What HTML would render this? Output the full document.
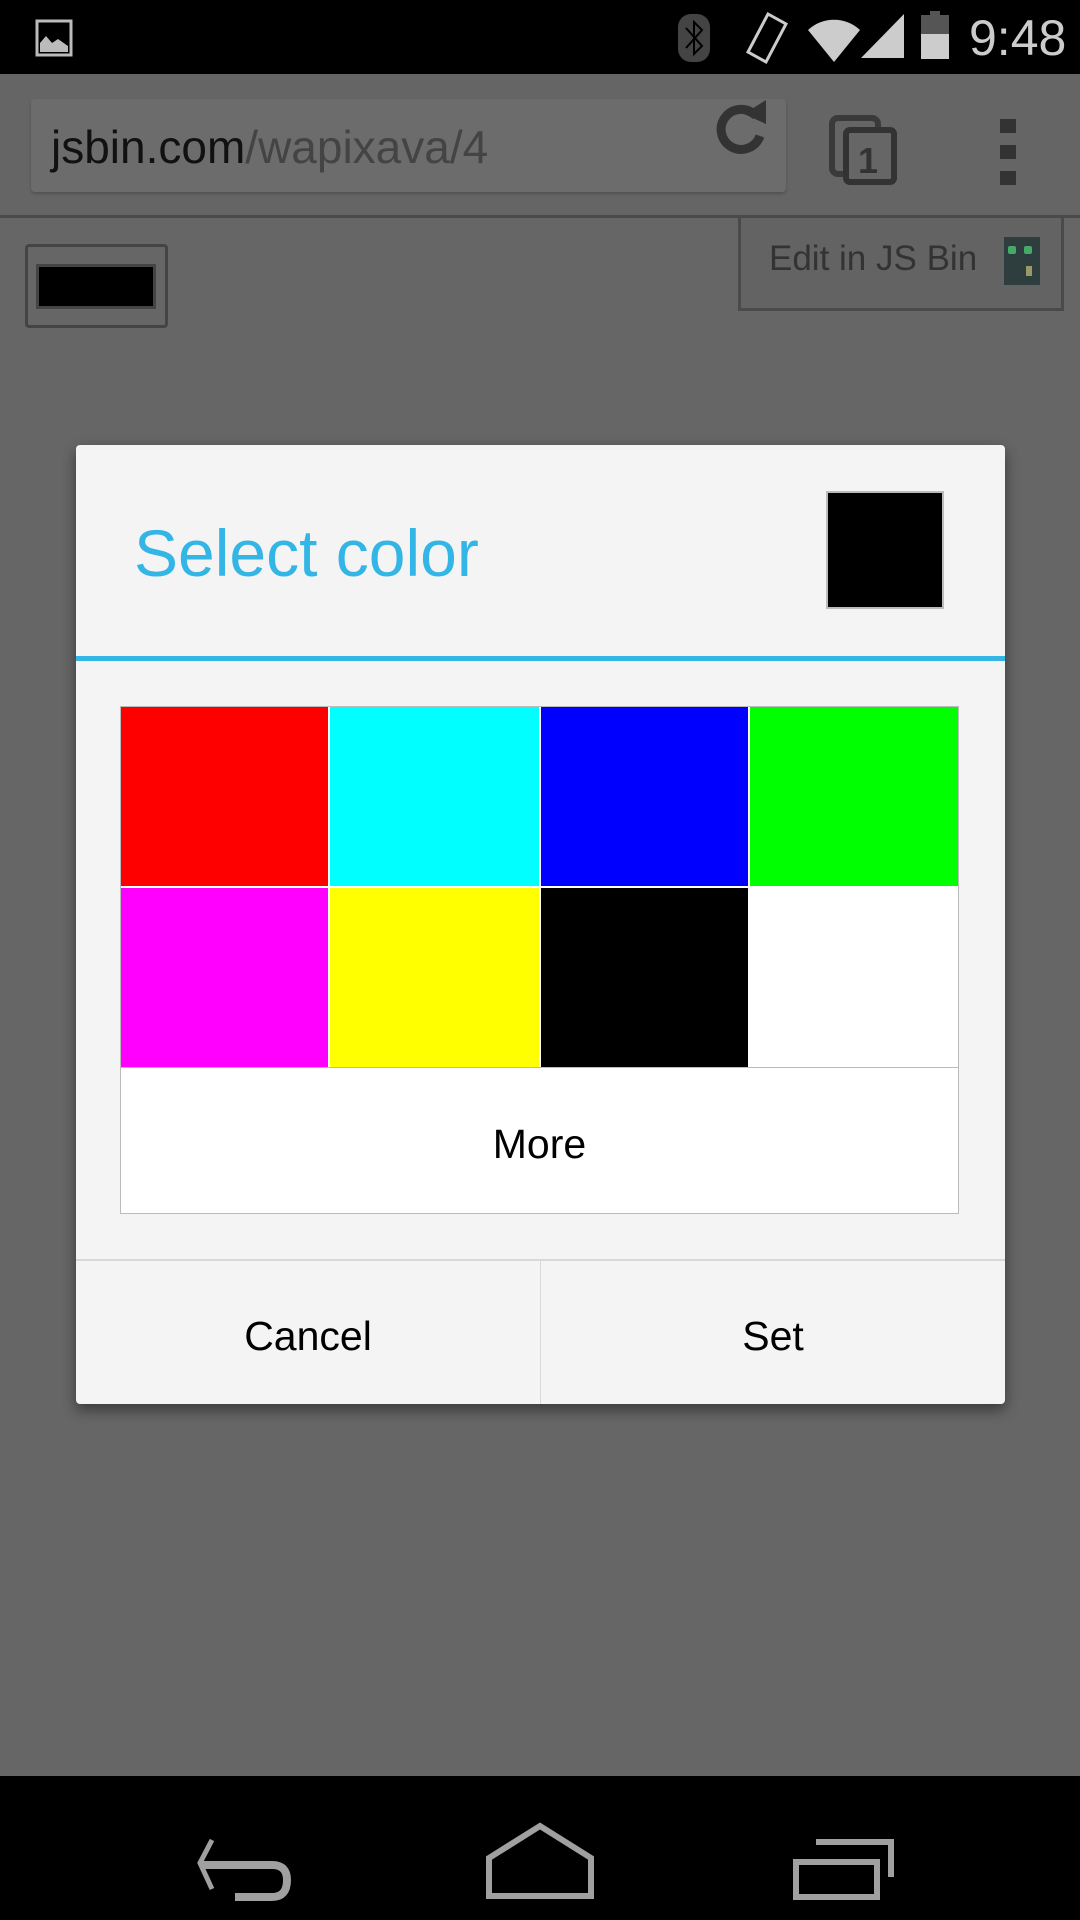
<!DOCTYPE html>
<html><head><meta charset="utf-8"><style>
*{margin:0;padding:0;box-sizing:border-box}
body{width:1080px;height:1920px;position:relative;background:#666;font-family:"Liberation Sans",sans-serif;overflow:hidden}
.abs{position:absolute}
</style></head><body>
<div class="abs" style="left:0;top:0;width:1080px;height:74px;background:#000"></div>
<svg class="abs" style="left:0;top:0" width="1080" height="74">
<rect x="37" y="21" width="34" height="34" fill="none" stroke="#bbb" stroke-width="3"/>
<path d="M40 52 L40 43 L46 36 L52 43 L58 39 L68 46 L68 52Z" fill="#bbb"/>
<rect x="678" y="14" width="32" height="48" rx="13" fill="#444"/>
<path d="M686 28 L702 46 L694 54 L694 22 L702 30 L686 48" fill="none" stroke="#000" stroke-width="2"/>
<path d="M768 14 L786 24 L766 62 L748 52Z" fill="none" stroke="#ccc" stroke-width="3"/>
<path d="M808 30 A38 38 0 0 1 860 30 L834 62Z" fill="#ccc"/>
<path d="M904 14 L904 58 L861 58Z" fill="#ccc"/>
<rect x="921" y="15" width="28" height="44" fill="#555"/><rect x="930" y="11" width="10" height="5" fill="#555"/>
<rect x="921" y="34" width="28" height="25" fill="#ccc"/>
<text x="969" y="55" font-size="50" fill="#ccc" font-family="Liberation Sans">9:48</text>
</svg>
<div class="abs" style="left:0;top:74px;width:1080px;height:144px;background:#656565;border-bottom:3px solid #4a4a4a"></div>
<div class="abs" style="left:31px;top:99px;width:755px;height:93px;background:#6c6c6c;border-radius:4px;box-shadow:0 2px 3px rgba(0,0,0,.2)"></div>
<div class="abs" style="left:51px;top:120px;font-size:46px;color:#111">jsbin.com<span style="color:#444">/wapixava/4</span></div>
<svg class="abs" style="left:0;top:74px" width="1080" height="144">
<path d="M756 42 A20 20 0 1 0 760 62" fill="none" stroke="#333" stroke-width="9"/>
<path d="M744 40 L766 26 L766 50Z" fill="#333"/>
<rect x="832" y="44" width="46" height="56" rx="6" fill="none" stroke="#3a3a3a" stroke-width="6"/>
<rect x="846" y="56" width="48" height="52" rx="4" fill="#666" stroke="#333" stroke-width="6"/>
<text x="858" y="99" font-size="36" font-weight="bold" fill="#333">1</text>
<rect x="1000" y="45" width="16" height="14" fill="#333"/><rect x="1000" y="71" width="16" height="14" fill="#333"/><rect x="1000" y="97" width="16" height="14" fill="#333"/>
</svg>
<div class="abs" style="left:25px;top:244px;width:143px;height:84px;border:3px solid #444;border-radius:4px"></div>
<div class="abs" style="left:36px;top:264px;width:120px;height:45px;background:#000;border:3px solid #444"></div>
<div class="abs" style="left:738px;top:218px;width:326px;height:93px;border:3px solid #4a4a4a;border-top:none;background:#636363"></div>
<div class="abs" style="left:769px;top:239px;font-size:35px;color:#333">Edit in JS Bin</div>
<div class="abs" style="left:1004px;top:237px;width:36px;height:48px;background:#2e3e3e"></div>
<div class="abs" style="left:1008px;top:246px;width:8px;height:8px;background:#4a6;border-radius:2px"></div>
<div class="abs" style="left:1024px;top:246px;width:8px;height:8px;background:#4a6;border-radius:2px"></div>
<div class="abs" style="left:1026px;top:266px;width:6px;height:10px;background:#996"></div>
<div class="abs" style="left:76px;top:445px;width:929px;height:959px;background:#f4f4f4;border-radius:4px;box-shadow:0 6px 14px rgba(0,0,0,.45)"></div>
<div class="abs" style="left:134px;top:515px;font-size:66px;color:#33b5e5;line-height:76px">Select color</div>
<div class="abs" style="left:826px;top:491px;width:118px;height:118px;background:#000;border:2px solid #bbb"></div>
<div class="abs" style="left:76px;top:656px;width:929px;height:5px;background:#33b5e5"></div>
<div class="abs" style="left:120px;top:706px;width:839px;height:508px;background:#fff;border:1px solid #bbb"></div>
<div class="abs" style="left:121px;top:707px;width:207px;height:179px;background:#f00"></div>
<div class="abs" style="left:330px;top:707px;width:209px;height:179px;background:#0ff"></div>
<div class="abs" style="left:541px;top:707px;width:207px;height:179px;background:#00f"></div>
<div class="abs" style="left:750px;top:707px;width:208px;height:179px;background:#0f0"></div>
<div class="abs" style="left:121px;top:888px;width:207px;height:179px;background:#f0f"></div>
<div class="abs" style="left:330px;top:888px;width:209px;height:179px;background:#ff0"></div>
<div class="abs" style="left:541px;top:888px;width:207px;height:179px;background:#000"></div>
<div class="abs" style="left:121px;top:1067px;width:837px;height:1px;background:#bbb"></div>
<div class="abs" style="left:120px;top:1120px;width:839px;text-align:center;font-size:41px;color:#000;line-height:48px">More</div>
<div class="abs" style="left:76px;top:1259px;width:929px;height:2px;background:#d8d8d8"></div>
<div class="abs" style="left:540px;top:1261px;width:1px;height:143px;background:#d8d8d8"></div>
<div class="abs" style="left:76px;top:1312px;width:464px;text-align:center;font-size:41px;line-height:48px">Cancel</div>
<div class="abs" style="left:541px;top:1312px;width:464px;text-align:center;font-size:41px;line-height:48px">Set</div>
<div class="abs" style="left:0;top:1776px;width:1080px;height:144px;background:#000"></div>
<svg class="abs" style="left:0;top:1776px" width="1080" height="144">
<path d="M212 64 L200 87 L212 113" fill="none" stroke="#a0a0a0" stroke-width="5"/>
<path d="M200 89 L272 89 Q287 89 287 104 Q287 121 272 121 L235 121" fill="none" stroke="#a0a0a0" stroke-width="8"/>
<path d="M489 82 L540 50 L591 82 L591 120 L489 120Z" fill="none" stroke="#a0a0a0" stroke-width="6"/>
<rect x="796" y="86" width="81" height="35" fill="none" stroke="#a0a0a0" stroke-width="6"/>
<path d="M816 66 L891 66 L891 101" fill="none" stroke="#a0a0a0" stroke-width="6"/>
</svg>
</body></html>
